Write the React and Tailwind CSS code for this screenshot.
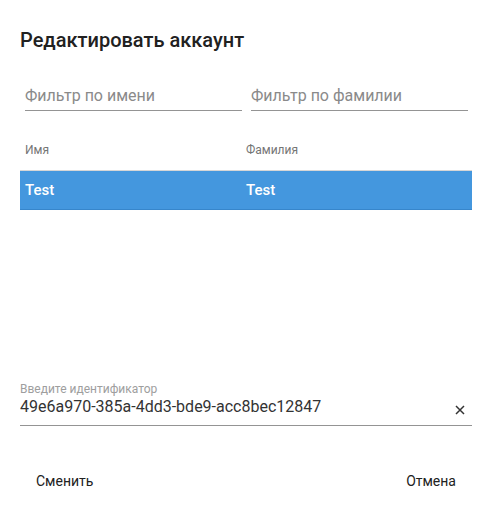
import React, { useState } from 'react';

const FilterInput = ({ placeholder }) => (
  <div className="pl-[5px] pr-[4px]">
    <input
      type="text"
      placeholder={placeholder}
      className="w-full bg-transparent outline-none text-[16px] leading-[20px] pt-0 pb-[4px] border-b border-[#949494] text-[#212121] placeholder:text-[#8a8a8a]"
    />
  </div>
);

const App = () => {
  const [id, setId] = useState('49e6a970-385a-4dd3-bde9-acc8bec12847');
  const rows = [{ first: 'Test', last: 'Test' }];

  return (
    <div
      className="w-[491px] h-[512px] bg-white"
      style={{ fontFamily: 'Roboto, "Noto Sans", sans-serif' }}
    >
      <div className="ml-[20px] w-[452px] pt-[28px]">
        <h2 className="text-[20px] leading-[24px] font-medium text-[#212121]">
          Редактировать аккаунт
        </h2>

        <div className="grid grid-cols-2 mt-[32px]">
          <FilterInput placeholder="Фильтр по имени" />
          <FilterInput placeholder="Фильтр по фамилии" />
        </div>

        <div className="mt-[19px] h-[251px]">
          <div className="grid grid-cols-[221px_1fr] h-[40px] items-center text-[12px] text-[#757575]">
            <div className="pl-[5px]">Имя</div>
            <div className="pl-[5px]">Фамилия</div>
          </div>
          {rows.map((r, i) => (
            <div
              key={i}
              className="grid grid-cols-[221px_1fr] h-[40px] items-center bg-[#4497de] border-t border-[#d6d6d6] border-b border-b-[#3786cb] text-[15px] font-medium text-white"
            >
              <div className="pl-[5px]">{r.first}</div>
              <div className="pl-[5px]">{r.last}</div>
            </div>
          ))}
        </div>

        <div>
          <label className="block text-[12px] leading-[16px] text-[#9e9e9e]">
            Введите идентификатор
          </label>
          <div className="flex items-start border-b border-[#949494] pb-[8px]">
            <input
              type="text"
              value={id}
              onChange={(e) => setId(e.target.value)}
              className="flex-1 min-w-0 bg-transparent outline-none text-[16px] leading-[20px] text-[#333333] p-0"
            />
            <button
              type="button"
              onClick={() => setId('')}
              className="mt-[8px] mr-[7px] w-[10px] h-[10px] flex items-center justify-center"
            >
              <svg width="10" height="10" viewBox="0 0 10 10">
                <path d="M1 1 L9 9 M9 1 L1 9" stroke="#333" strokeWidth="1.5" />
              </svg>
            </button>
          </div>
        </div>

        <div className="flex justify-between mt-[37px]">
          <button className="h-[36px] px-[16px] text-[14px] text-[#212121]">Сменить</button>
          <button className="h-[36px] px-[16px] text-[14px] text-[#212121]">Отмена</button>
        </div>
      </div>
    </div>
  );
};

export default App;
